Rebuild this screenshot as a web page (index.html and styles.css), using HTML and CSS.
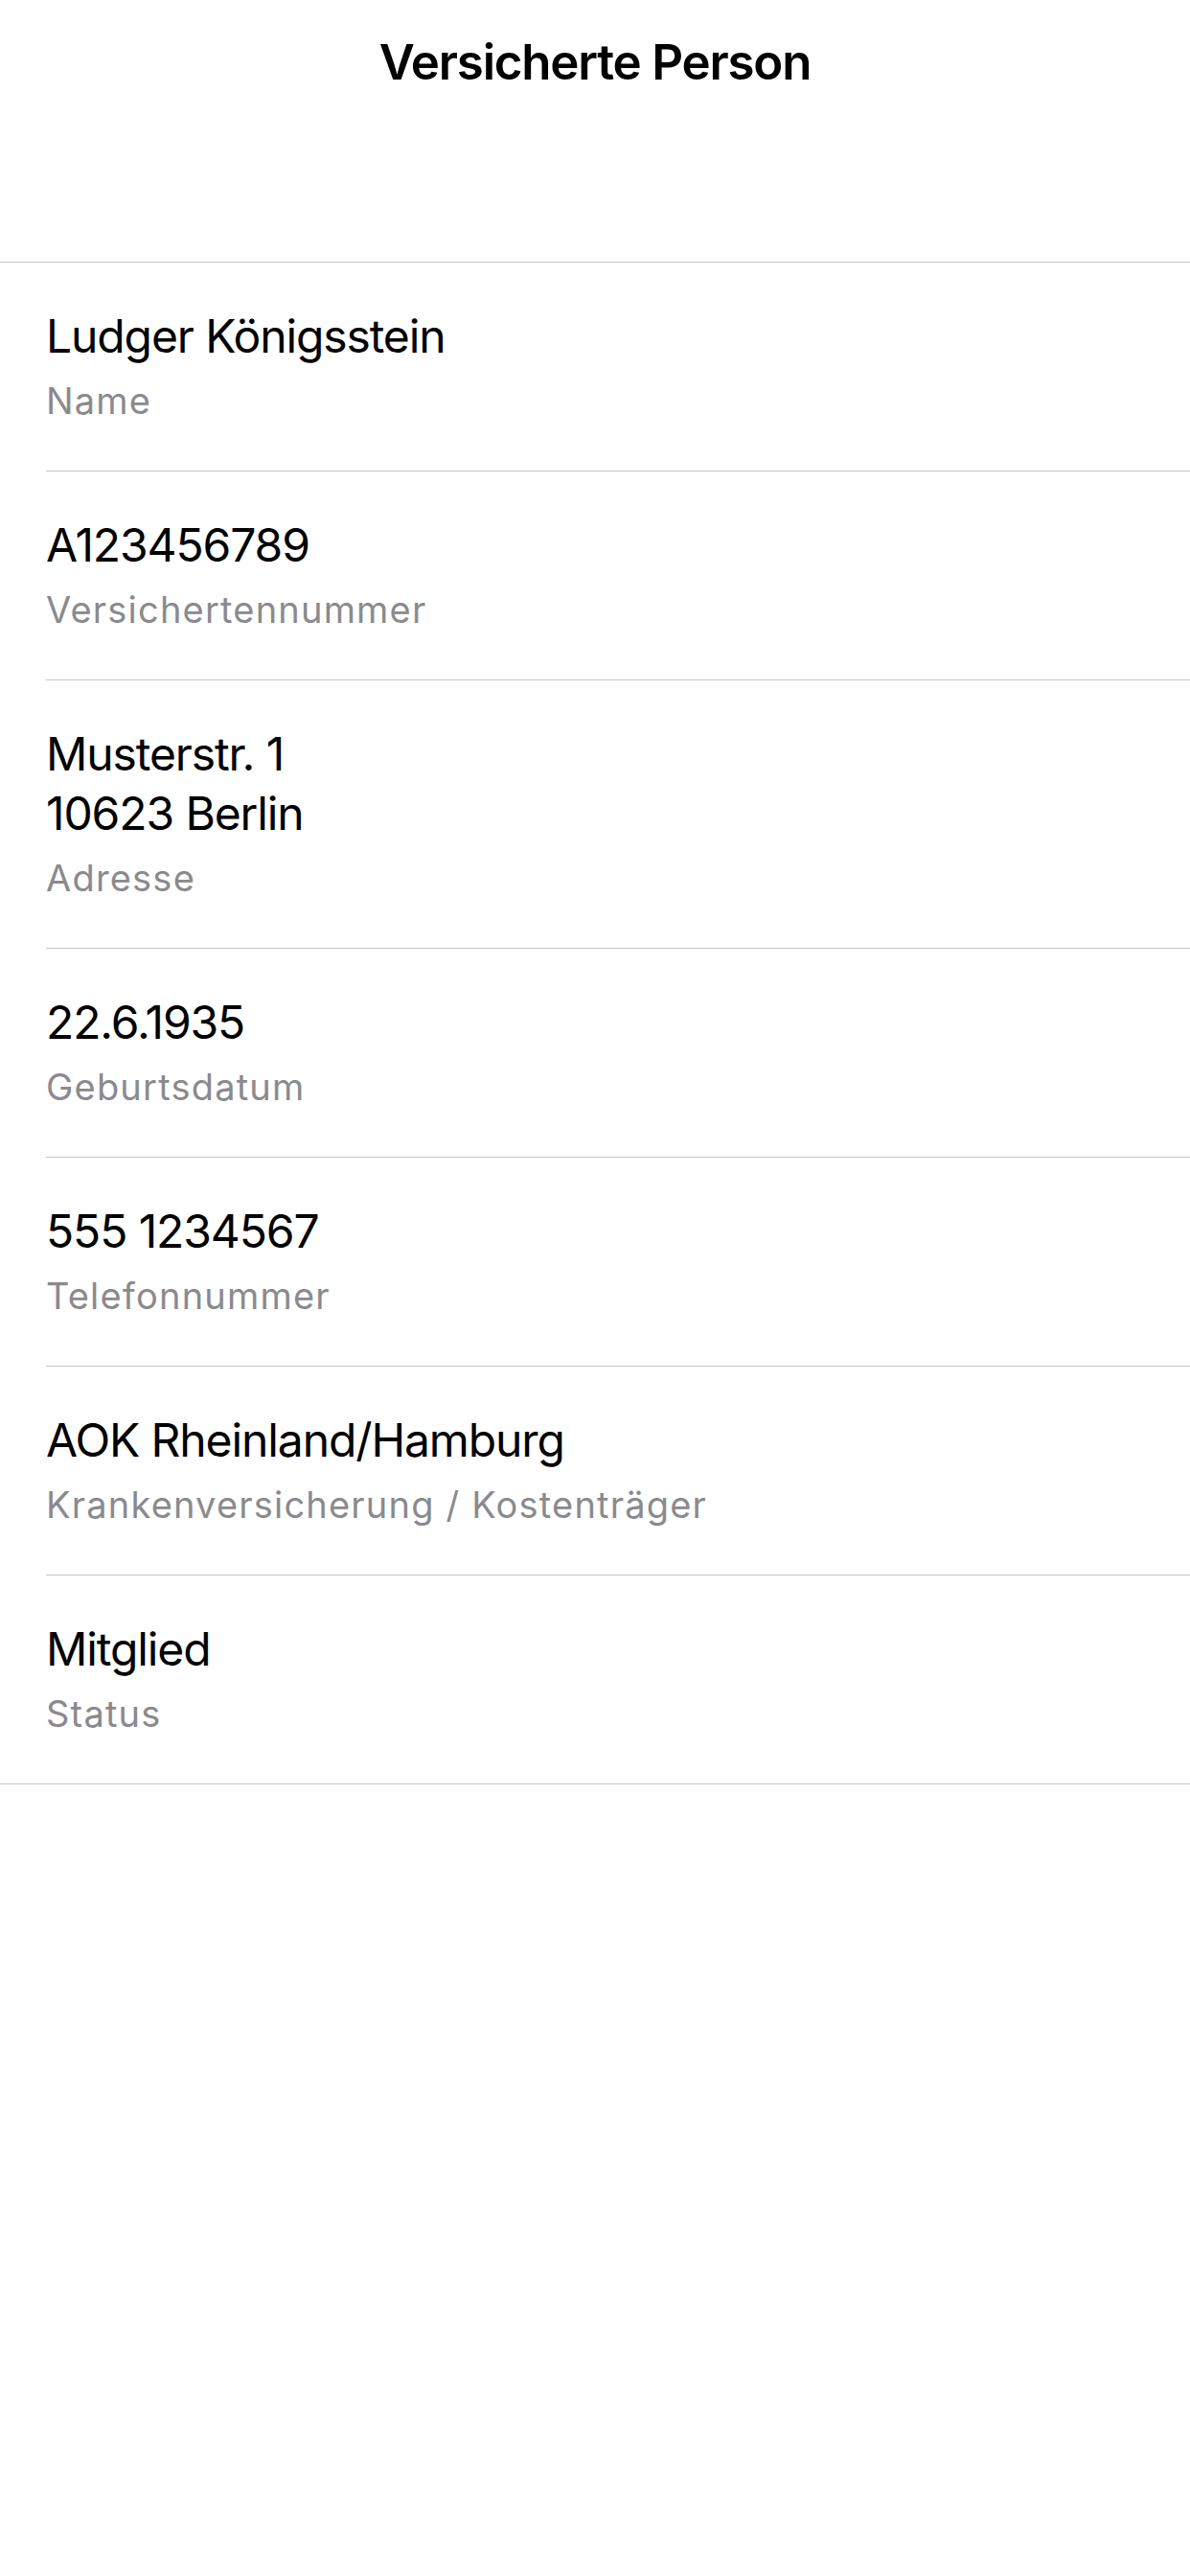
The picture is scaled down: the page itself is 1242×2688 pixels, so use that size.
FILE: index.html
```html
<!DOCTYPE html>
<html lang="de">
<head>
<meta charset="utf-8">
<title>Versicherte Person</title>
<link rel="stylesheet" href="styles.css">
</head>
<body>
<header class="nav">
  <h1 class="nav-title">Versicherte Person</h1>
</header>
<ul class="list">
  <li class="row"><div class="row-inner"><div class="value">Ludger Königsstein</div><div class="label">Name</div></div></li>
  <li class="row"><div class="row-inner"><div class="value">A123456789</div><div class="label">Versichertennummer</div></div></li>
  <li class="row"><div class="row-inner"><div class="value">Musterstr. 1<br>10623 Berlin</div><div class="label">Adresse</div></div></li>
  <li class="row"><div class="row-inner"><div class="value">22.6.1935</div><div class="label">Geburtsdatum</div></div></li>
  <li class="row"><div class="row-inner"><div class="value">555 1234567</div><div class="label">Telefonnummer</div></div></li>
  <li class="row"><div class="row-inner"><div class="value">AOK Rheinland/Hamburg</div><div class="label">Krankenversicherung / Kostenträger</div></div></li>
  <li class="row"><div class="row-inner"><div class="value">Mitglied</div><div class="label">Status</div></div></li>
</ul>
</body>
</html>
```

FILE: styles.css
```css
* { box-sizing: border-box; }
html, body {
  margin: 0;
  padding: 0;
  background: #ffffff;
}
body {
  width: 1242px;
  min-height: 2688px;
  font-family: Inter, "Noto Sans", "Liberation Sans", sans-serif;
  color: #000000;
}
.nav {
  height: 274px;
  padding-top: 34px;
  border-bottom: 1px solid #c6c6c8;
}
.nav-title {
  margin: 0;
  text-align: center;
  font-size: 51px;
  line-height: 61px;
  font-weight: 600;
  letter-spacing: -1.2px;
}
.list {
  list-style: none;
  margin: 0;
  padding: 0;
  border-bottom: 1px solid #c6c6c8;
}
.row {
  padding-left: 48px;
}
.row-inner {
  padding: 46px 0 37px;
  border-bottom: 1px solid #c6c6c8;
}
.row:last-child .row-inner {
  border-bottom: none;
}
.value {
  font-size: 48px;
  line-height: 62px;
  font-weight: 400;
  letter-spacing: -1.1px;
  color: #000000;
}
.label {
  font-size: 38px;
  line-height: 72px;
  letter-spacing: 1.2px;
  color: #8a8a8e;
}
```
